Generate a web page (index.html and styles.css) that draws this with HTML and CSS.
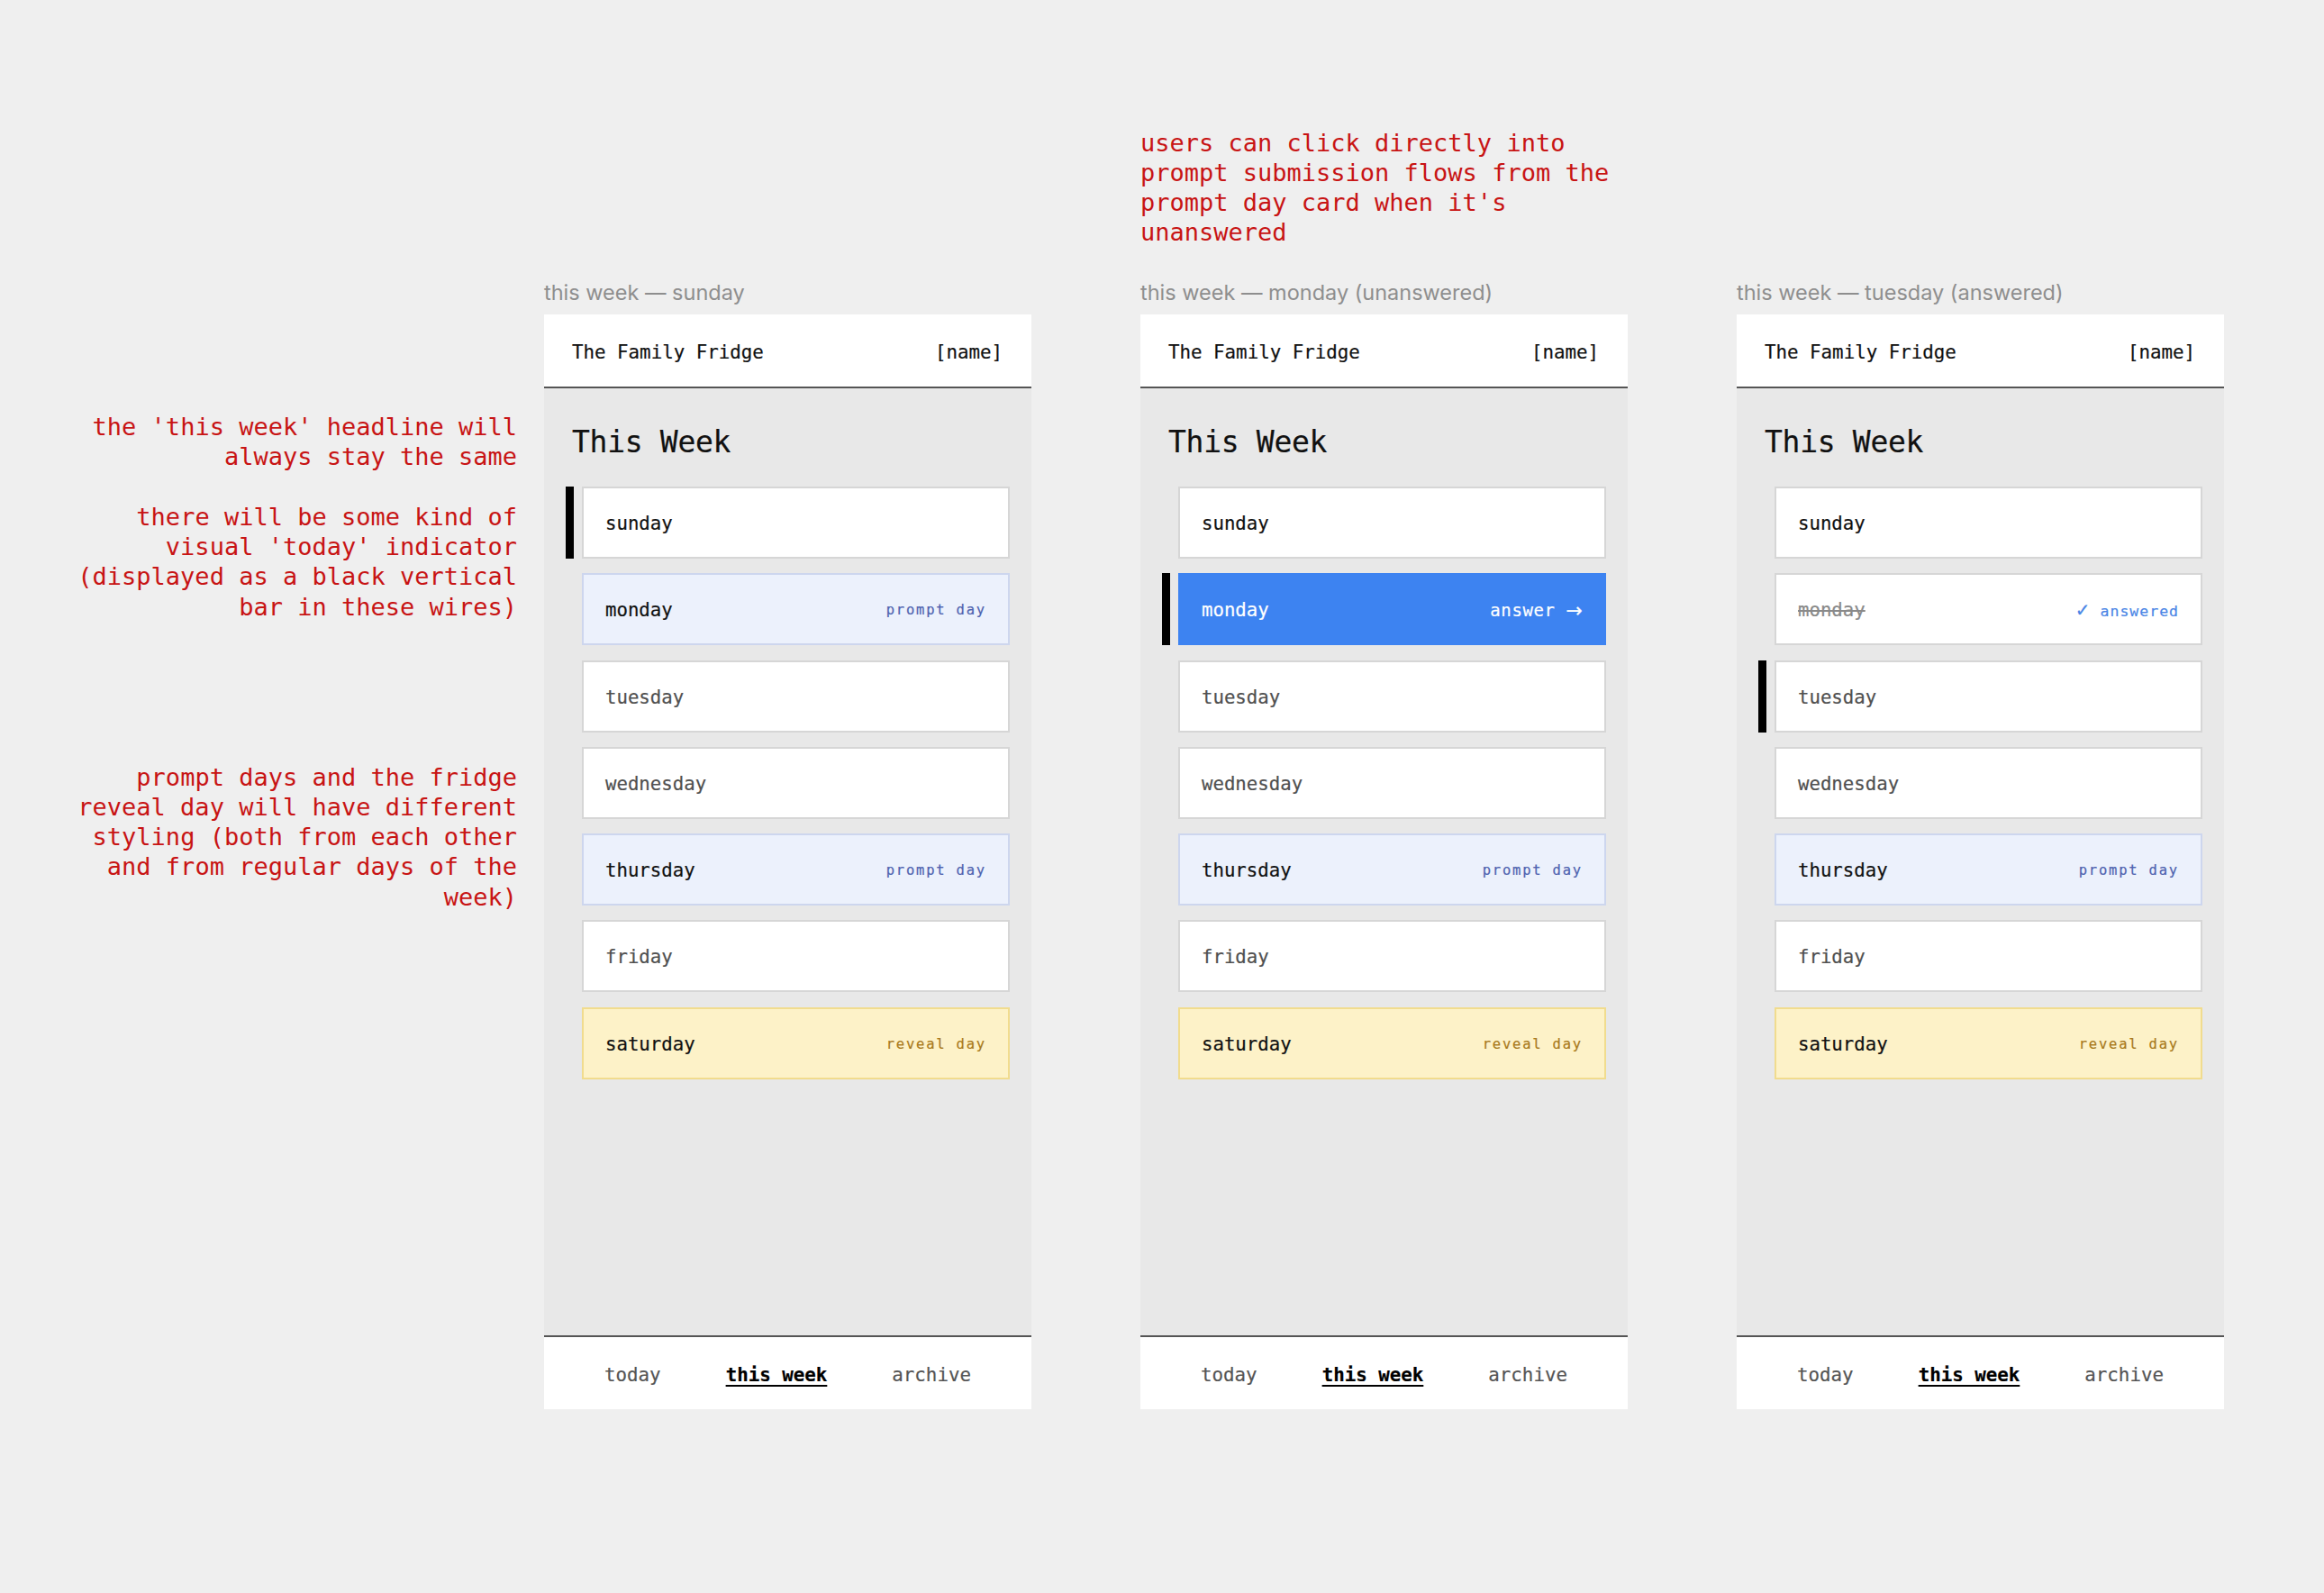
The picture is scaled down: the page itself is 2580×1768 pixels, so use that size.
FILE: index.html
```html
<!DOCTYPE html>
<html lang="en">
<head>
<meta charset="utf-8">
<title>The Family Fridge — this week wires</title>
<link rel="stylesheet" href="styles.css">
</head>
<body>
<div class="board">
  <aside class="notes-left">
    <p class="note">the 'this week' headline will<br>always stay the same</p>
    <p class="note n2">there will be some kind of<br>visual 'today' indicator<br>(displayed as a black vertical<br>bar in these wires)</p>
    <p class="note n3">prompt days and the fridge<br>reveal day will have different<br>styling (both from each other<br>and from regular days of the<br>week)</p>
  </aside>

  <section class="col">
    <div class="top-note"></div>
    <div class="caption">this week — sunday</div>
    <div class="phone">
      <header class="app-head"><span>The Family Fridge</span><span>[name]</span></header>
      <main class="content">
        <h1 class="title">This Week</h1>
        <ul class="days">
          <li class="row today"><span class="bar"></span><div class="card"><span class="day strong">sunday</span></div></li>
          <li class="row"><span class="bar"></span><div class="card prompt"><span class="day strong">monday</span><span class="tag">prompt day</span></div></li>
          <li class="row"><span class="bar"></span><div class="card"><span class="day">tuesday</span></div></li>
          <li class="row"><span class="bar"></span><div class="card"><span class="day">wednesday</span></div></li>
          <li class="row"><span class="bar"></span><div class="card prompt"><span class="day strong">thursday</span><span class="tag">prompt day</span></div></li>
          <li class="row"><span class="bar"></span><div class="card"><span class="day">friday</span></div></li>
          <li class="row"><span class="bar"></span><div class="card reveal"><span class="day strong">saturday</span><span class="tag">reveal day</span></div></li>
        </ul>
      </main>
      <nav class="tabs"><span class="tab">today</span><span class="tab active">this week</span><span class="tab">archive</span></nav>
    </div>
  </section>

  <section class="col">
    <div class="top-note">users can click directly into<br>prompt submission flows from the<br>prompt day card when it's<br>unanswered</div>
    <div class="caption">this week — monday (unanswered)</div>
    <div class="phone">
      <header class="app-head"><span>The Family Fridge</span><span>[name]</span></header>
      <main class="content">
        <h1 class="title">This Week</h1>
        <ul class="days">
          <li class="row"><span class="bar"></span><div class="card"><span class="day strong">sunday</span></div></li>
          <li class="row today"><span class="bar"></span><div class="card action"><span class="day">monday</span><span class="cta">answer <span class="arrow">→</span></span></div></li>
          <li class="row"><span class="bar"></span><div class="card"><span class="day">tuesday</span></div></li>
          <li class="row"><span class="bar"></span><div class="card"><span class="day">wednesday</span></div></li>
          <li class="row"><span class="bar"></span><div class="card prompt"><span class="day strong">thursday</span><span class="tag">prompt day</span></div></li>
          <li class="row"><span class="bar"></span><div class="card"><span class="day">friday</span></div></li>
          <li class="row"><span class="bar"></span><div class="card reveal"><span class="day strong">saturday</span><span class="tag">reveal day</span></div></li>
        </ul>
      </main>
      <nav class="tabs"><span class="tab">today</span><span class="tab active">this week</span><span class="tab">archive</span></nav>
    </div>
  </section>

  <section class="col">
    <div class="top-note"></div>
    <div class="caption">this week — tuesday (answered)</div>
    <div class="phone">
      <header class="app-head"><span>The Family Fridge</span><span>[name]</span></header>
      <main class="content">
        <h1 class="title">This Week</h1>
        <ul class="days">
          <li class="row"><span class="bar"></span><div class="card"><span class="day strong">sunday</span></div></li>
          <li class="row"><span class="bar"></span><div class="card"><span class="day done">monday</span><span class="tag answered"><span class="check">✓</span> answered</span></div></li>
          <li class="row today"><span class="bar"></span><div class="card"><span class="day">tuesday</span></div></li>
          <li class="row"><span class="bar"></span><div class="card"><span class="day">wednesday</span></div></li>
          <li class="row"><span class="bar"></span><div class="card prompt"><span class="day strong">thursday</span><span class="tag">prompt day</span></div></li>
          <li class="row"><span class="bar"></span><div class="card"><span class="day">friday</span></div></li>
          <li class="row"><span class="bar"></span><div class="card reveal"><span class="day strong">saturday</span><span class="tag">reveal day</span></div></li>
        </ul>
      </main>
      <nav class="tabs"><span class="tab">today</span><span class="tab active">this week</span><span class="tab">archive</span></nav>
    </div>
  </section>
</div>
</body>
</html>
```

FILE: styles.css
```css
* { box-sizing: border-box; }

html, body {
  margin: 0;
  padding: 0;
  background: #efefef;
}

body {
  font-family: "DejaVu Sans Mono", "Liberation Mono", monospace;
  color: #111;
}

.board {
  display: flex;
  align-items: flex-start;
  width: 2580px;
  height: 1768px;
  padding: 142px 0 0 44px;
}

/* red annotations */
.notes-left {
  flex: none;
  width: 530px;
  margin-right: 30px;
  padding-top: 315px;
  text-align: right;
  color: #c81414;
  font-size: 27px;
  line-height: 33.3px;
}

.note { margin: 0; }
.n2 { margin-top: 33.3px; }
.n3 { margin-top: 155.5px; }

.col {
  flex: none;
  width: 541px;
  margin-right: 121px;
}

.col:last-child { margin-right: 0; }

.top-note {
  height: 167px;
  color: #c81414;
  font-size: 27px;
  line-height: 33px;
  white-space: nowrap;
}

.caption {
  height: 30px;
  margin-bottom: 10px;
  font-family: Inter, "Liberation Sans", sans-serif;
  font-size: 23.5px;
  line-height: 31px;
  color: #8e8e8e;
  white-space: nowrap;
}

/* phone frame */
.phone {
  width: 541px;
  height: 1215px;
  display: flex;
  flex-direction: column;
  background: #e8e8e8;
  -webkit-text-stroke: 0.2px currentColor;
}

.app-head {
  height: 82px;
  flex: none;
  display: flex;
  align-items: center;
  justify-content: space-between;
  padding: 3px 32px 0 31px;
  background: #fff;
  border-bottom: 2px solid #555;
  font-size: 20.8px;
  color: #111;
}

.content {
  flex: 1;
  padding-top: 40px;
}

.title {
  margin: 0 0 29px 31px;
  font-size: 33px;
  line-height: 40px;
  font-weight: normal;
  color: #111;
  letter-spacing: -0.3px;
}

.days {
  list-style: none;
  margin: 0;
  padding: 0;
  display: flex;
  flex-direction: column;
  gap: 16.3px;
}

.row {
  display: flex;
  gap: 9px;
  padding: 0 24px;
}

.bar {
  width: 9px;
  flex: none;
}

.today .bar { background: #000; }

.card {
  flex: 1;
  height: 80px;
  display: flex;
  align-items: center;
  justify-content: space-between;
  padding: 2px 24px 0 24px;
  background: #fff;
  border: 2px solid #d6d6d6;
}

.card.prompt {
  background: #ecf1fc;
  border-color: #cdd6ee;
}

.card.reveal {
  background: #fdf2c8;
  border-color: #f1dc8e;
}

.card.action {
  background: #3d83f1;
  border-color: #3d83f1;
  color: #fff;
}

.day {
  font-size: 20.7px;
  color: #505050;
}

.day.strong { color: #111; }

.action .day { color: #fff; }

.day.done {
  color: #8a8a8a;
  text-decoration: line-through;
  text-decoration-thickness: 1.5px;
}

.tag {
  font-size: 15.5px;
  letter-spacing: 1.8px;
  color: #4f63b0;
}

.reveal .tag { color: #a97a1c; }

.tag.answered {
  color: #4a86e6;
  font-size: 16.5px;
  letter-spacing: 1px;
}

.check {
  font-family: "DejaVu Sans", sans-serif;
  font-size: 20px;
  letter-spacing: 0;
}

.cta {
  display: flex;
  align-items: center;
  gap: 12px;
  font-size: 19px;
  letter-spacing: 0.6px;
  color: #fff;
}

.arrow {
  font-family: "DejaVu Sans", sans-serif;
  font-size: 22px;
  letter-spacing: 0;
}

/* bottom tabs */
.tabs {
  height: 82px;
  flex: none;
  display: flex;
  align-items: center;
  justify-content: center;
  gap: 72px;
  padding-top: 3px;
  background: #fff;
  border-top: 2px solid #555;
  font-size: 20.8px;
}

.tab { color: #555; }

.tab.active {
  color: #000;
  font-weight: bold;
  text-decoration: underline;
  text-decoration-thickness: 2px;
  text-underline-offset: 4px;
}
```
